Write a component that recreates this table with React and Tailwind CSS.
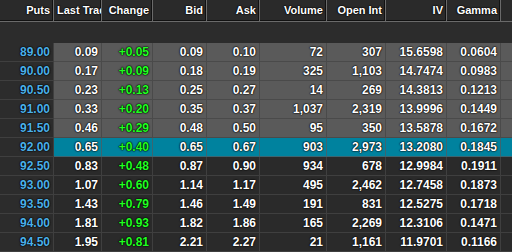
const cols = [
  { key: "puts", label: "Puts", w: "w-[54px]" },
  { key: "last", label: "Last Trade", w: "w-[48px]" },
  { key: "chg", label: "Change", w: "w-[51px]" },
  { key: "bid", label: "Bid", w: "w-[54px]" },
  { key: "ask", label: "Ask", w: "w-[53px]" },
  { key: "vol", label: "Volume", w: "w-[67px]" },
  { key: "oi", label: "Open Int", w: "w-[59px]" },
  { key: "iv", label: "IV", w: "w-[61px]" },
  { key: "gamma", label: "Gamma", w: "w-[54px]" },
];

const rows = [
  ["89.00", "0.09", "+0.05", "0.09", "0.10", "72", "307", "15.6598", "0.0604", "itm"],
  ["90.00", "0.17", "+0.09", "0.18", "0.19", "325", "1,103", "14.7474", "0.0983", "itm"],
  ["90.50", "0.23", "+0.13", "0.25", "0.27", "14", "269", "14.3813", "0.1213", "itm"],
  ["91.00", "0.33", "+0.20", "0.35", "0.37", "1,037", "2,319", "13.9996", "0.1449", "itm"],
  ["91.50", "0.46", "+0.29", "0.48", "0.50", "95", "350", "13.5878", "0.1672", "itm"],
  ["92.00", "0.65", "+0.40", "0.65", "0.67", "903", "2,973", "13.2080", "0.1845", "atm"],
  ["92.50", "0.83", "+0.48", "0.87", "0.90", "934", "678", "12.9984", "0.1911", "otm"],
  ["93.00", "1.07", "+0.60", "1.14", "1.17", "495", "2,462", "12.7458", "0.1873", "otm"],
  ["93.50", "1.43", "+0.79", "1.46", "1.49", "191", "831", "12.5275", "0.1718", "otm"],
  ["94.00", "1.81", "+0.93", "1.82", "1.86", "165", "2,269", "12.3106", "0.1471", "otm"],
  ["94.50", "1.95", "+0.81", "2.21", "2.27", "21", "1,161", "11.9701", "0.1166", "otm"],
];

const rowStyle = {
  itm: "bg-[#5a5a5a] border-[#4a4a4a]",
  atm: "bg-[#00829e] border-[#3c6570]",
  otm: "bg-[#2a2a2a] border-[#3f3f3f]",
};

const shadow = "[text-shadow:0_0_2px_#000,0_0_1px_#000,0_0_1px_#000]";

export default function App() {
  return (
    <div className="w-[512px] h-[252px] overflow-hidden bg-[#2a2a2a] font-['Liberation_Sans',Arial,sans-serif] text-[12px] leading-none">
      {/* header */}
      <div className="flex h-[22px] bg-[#2a2a2a] border-b border-[#6a6a6a]">
        {cols.map((c) => (
          <div
            key={c.key}
            className={`${c.w} shrink-0 h-[21px] leading-[21px] text-right pl-[3px] pr-[3px] border-r border-[#6a6a6a] shadow-[inset_-1px_-1px_0_#111] overflow-hidden whitespace-nowrap font-bold text-[11px] text-white ${shadow}`}
          >
            {c.label}
          </div>
        ))}
        <div className="flex-1 h-[21px] bg-[#2a2a2a]" />
      </div>
      {/* spacer row */}
      <div className="h-[21px] bg-[#2c2c2c]" />
      {rows.map((r) => {
        const kind = r[9];
        return (
          <div key={r[0]} className="flex h-[19px]">
            <div className={`w-[54px] shrink-0 flex items-center justify-end pr-[3px] bg-[#2c2c2c] border-r border-b border-[#3f3f3f] font-bold text-[#4cb0e8] ${shadow}`}>
              {r[0]}
            </div>
            {r.slice(1, 9).map((v, i) => (
              <div
                key={i}
                className={`${cols[i + 1].w} shrink-0 flex items-center justify-end pr-[3px] border-r border-b ${rowStyle[kind]} font-bold ${i === 1 ? "text-[#22ff22]" : "text-white"} ${shadow}`}
              >
                {v}
              </div>
            ))}
            <div className={`flex-1 border-b ${rowStyle[kind]}`} />
          </div>
        );
      })}
    </div>
  );
}
